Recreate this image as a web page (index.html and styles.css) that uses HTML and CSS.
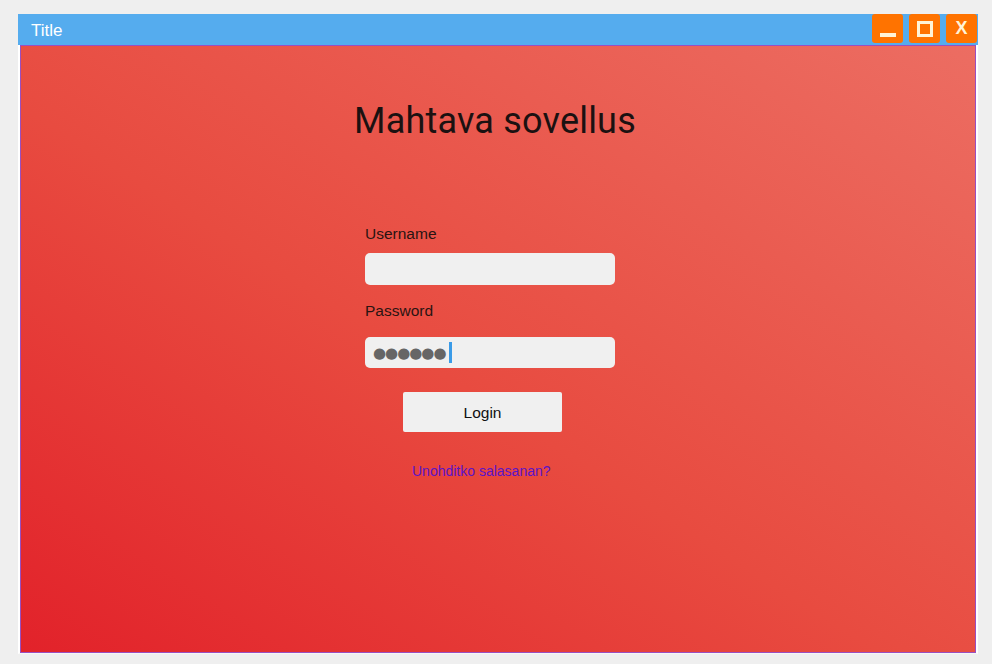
FILE: index.html
```html
<!DOCTYPE html>
<html>
<head>
<meta charset="utf-8">
<link rel="stylesheet" href="styles.css">
</head>
<body>
<div class="window">
  <div class="titlebar">
    <span class="title">Title</span>
    <div class="controls">
      <div class="ctrl"><span class="min"></span></div>
      <div class="ctrl"><span class="max"></span></div>
      <div class="ctrl close">X</div>
    </div>
  </div>
  <div class="frame">
    <div class="content">
      <h1 class="app-title">Mahtava sovellus</h1>
      <form class="login">
        <label class="lbl">Username</label>
        <div class="field"></div>
        <label class="lbl pw">Password</label>
        <div class="field pwfield"><span class="dots">●●●●●●</span><span class="caret"></span></div>
        <div class="btn-row"><div class="btn">Login</div></div>
        <div class="link-row"><a class="link">Unohditko salasanan?</a></div>
      </form>
    </div>
  </div>
</div>
</body>
</html>
```
FILE: styles.css
```css
html, body { margin: 0; padding: 0; }
body {
  background: #efefef;
  width: 992px;
  height: 664px;
  overflow: hidden;
  font-family: "Liberation Sans", Arial, sans-serif;
}
.window {
  margin: 14px 0 0 18px;
  width: 960px;
}
.titlebar {
  height: 31px;
  background: #55acee;
  display: flex;
  align-items: flex-start;
  justify-content: space-between;
}
.title {
  color: #fff;
  font-size: 17px;
  line-height: 33px;
  margin-left: 13px;
}
.controls {
  display: flex;
  gap: 6px;
  margin-right: 1px;
}
.ctrl {
  width: 31px;
  height: 29px;
  background: #ff7300;
  border-radius: 3px;
  display: flex;
  align-items: center;
  justify-content: center;
  color: #fff3d6;
  font-size: 18px;
  font-weight: bold;
}
.min {
  width: 16px;
  height: 4px;
  background: #fff3d6;
  margin-top: 12px;
}
.max {
  width: 10px;
  height: 10px;
  border: 3px solid #fff3d6;
}
.frame {
  border-left: 2px solid #fff;
  border-right: 2px solid #fff;
  border-bottom: 1px solid #f6f6f6;
  width: 956px;
}
.content {
  height: 606px;
  border: 1px solid #9a4fc0;
  background: linear-gradient(to top right, #e2222a 0%, #e84b40 45%, #ec6d62 100%);
}
.app-title {
  margin: 0;
  padding-top: 55px;
  text-align: center;
  font-family: Roboto, "Liberation Sans", sans-serif;
  font-weight: 400;
  font-size: 36px;
  letter-spacing: 0.2px;
  line-height: 40px;
  color: #1b1111;
  padding-right: 6px;
}
.login {
  width: 250px;
  margin: 84px 0 0 344px;
  display: flex;
  flex-direction: column;
}
.lbl {
  font-size: 15.5px;
  color: #2a1412;
  line-height: 18px;
  height: 18px;
}
.field {
  margin-top: 10px;
  height: 32px;
  background: #f0f0f0;
  border-radius: 5px;
  display: flex;
  align-items: center;
}
.lbl.pw { margin-top: 17px; }
.pwfield { margin-top: 17px; height: 31px; }
.dots {
  color: #666;
  font-family: "DejaVu Sans", sans-serif;
  font-size: 15px;
  letter-spacing: -1px;
  margin-left: 8px;
}
.caret {
  width: 3px;
  height: 21px;
  background: #3a9be8;
  margin-left: 3px;
}
.btn-row {
  margin-top: 24px;
  padding-left: 38px;
}
.btn {
  width: 159px;
  height: 40px;
  background: #f0f0f0;
  border-radius: 2px;
  text-align: center;
  line-height: 42px;
  font-size: 15.5px;
  color: #111;
}
.link-row {
  margin-top: 30px;
  padding-left: 47px;
}
.link {
  color: #5a14c8;
  font-size: 14px;
}
```
